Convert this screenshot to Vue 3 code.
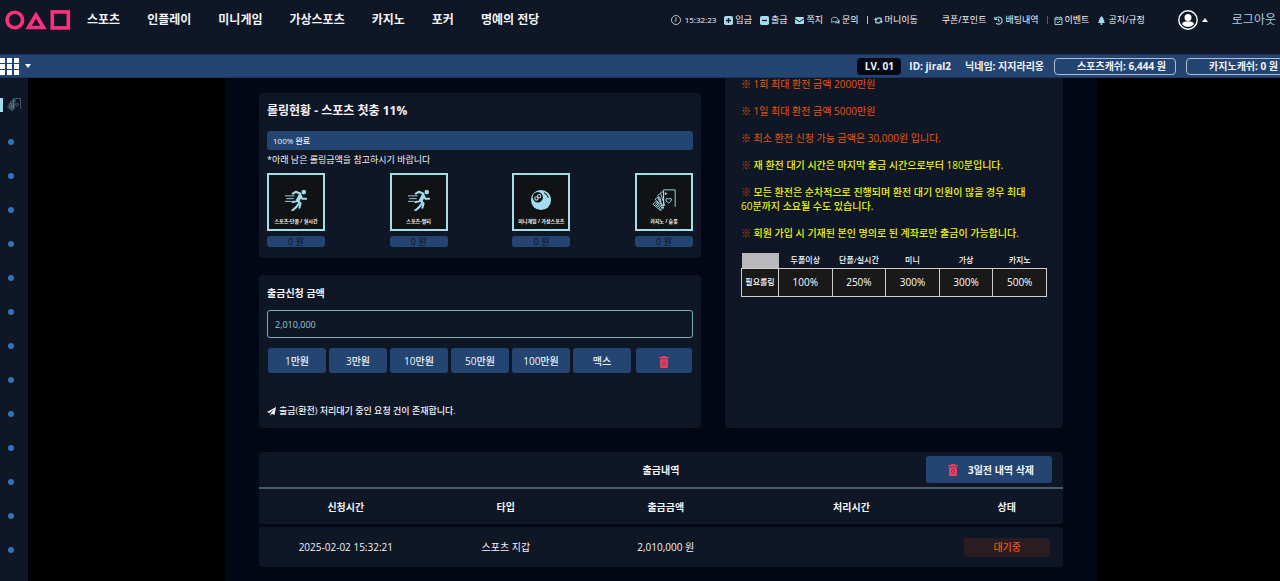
<script setup>
import { ref } from 'vue'

const nav = ['스포츠', '인플레이', '미니게임', '가상스포츠', '카지노', '포커', '명예의 전당']
const toolsLeft = [
  { icon: 'plus', label: '입금' },
  { icon: 'minus', label: '출금' },
  { icon: 'mail', label: '쪽지' },
  { icon: 'chat', label: '문의' },
]
const wallets = [
  { icon: 'run', label: '스포츠-단폴 / 실시간' },
  { icon: 'run', label: '스포츠-멀티' },
  { icon: 'ball', label: '미니게임 / 가상스포츠' },
  { icon: 'cards', label: '카지노 / 슬롯' },
]
const amounts = ['1만원', '3만원', '10만원', '50만원', '100만원', '맥스']
const limits = ['1회 최대 환전 금액 2000만원', '1일 최대 환전 금액 5000만원', '최소 환전 신청 가능 금액은 30,000원 입니다.']
const notes = [
  '재 환전 대기 시간은 마지막 출금 시간으로부터 180분입니다.',
  '모든 환전은 순차적으로 진행되며 환전 대기 인원이 많을 경우 최대 60분까지 소요될 수도 있습니다.',
  '회원 가입 시 기재된 본인 명의로 된 계좌로만 출금이 가능합니다.',
]
const ruleHeads = ['두폴이상', '단폴/실시간', '미니', '가상', '카지노']
const ruleValues = ['100%', '250%', '300%', '300%', '500%']
const historyHeads = ['신청시간', '타입', '출금금액', '처리시간', '상태']
const amount = ref('2,010,000')
</script>

<template>
  <div class="page">
    <svg class="sprite" aria-hidden="true">
      <symbol id="i-clock" viewBox="0 0 20 20"><circle cx="10" cy="10" r="9" fill="none" stroke="currentColor" stroke-width="1.6" /><path d="M10 4.500v6M10 10.500L7.500 14" fill="none" stroke="currentColor" stroke-width="1.600" /></symbol>
      <symbol id="i-plus" viewBox="0 0 16 16"><rect width="16" height="16" rx="3" fill="currentColor" /><path d="M8 3.500v9M3.500 8h9" stroke="#0f1626" stroke-width="2.400" /></symbol>
      <symbol id="i-minus" viewBox="0 0 16 16"><rect width="16" height="16" rx="3" fill="currentColor" /><path d="M3.500 8h9" stroke="#0f1626" stroke-width="2.400" /></symbol>
      <symbol id="i-mail" viewBox="0 0 18 16"><path d="M2 1h14a2 2 0 0 1 2 2v.6L9 9.400 0 3.600V3a2 2 0 0 1 2-2zM0 5.600l9 5.800 9-5.800V13a2 2 0 0 1-2 2H2a2 2 0 0 1-2-2z" fill="currentColor" /></symbol>
      <symbol id="i-chat" viewBox="0 0 20 16"><path d="M8 1c4.400 0 7.500 2.200 7.500 5s-3.100 5-7.500 5c-1.200 0-2.400-.2-3.400-.5C3.500 11.300 2 12 .4 12c.9-.9 1.400-2 1.500-3C.9 8.200.5 7.200.5 6c0-2.800 3.100-5 7.500-5z" fill="none" stroke="currentColor" stroke-width="1.800" /><path d="M17 5.500c1.600.9 2.600 2.200 2.600 3.800 0 1.200-.5 2.200-1.400 3 .1 1 .7 2 1.500 2.900-1.700 0-3.100-.7-4.200-1.500-1 .3-2 .5-3.200.5-2 0-3.800-.5-5.200-1.400C12.500 13 17.500 10.500 17 5.500z" fill="currentColor" /></symbol>
      <symbol id="i-swap" viewBox="0 0 20 16"><path d="M5 13.500h8.500M15 2.500H6.500M4.200 6v6.500q0 1 1 1M15.800 10V3.500q0-1-1-1" fill="none" stroke="currentColor" stroke-width="2.800" /><path d="M4.200 1.500L8.300 7H0zM15.800 14.500L20 9h-8.300z" fill="currentColor" /></symbol>
      <symbol id="i-history" viewBox="0 0 18 18"><path d="M3.500 4.500A7.200 7.200 0 1 1 4 14.300M9 5v4.500l3 1.800" fill="none" stroke="currentColor" stroke-width="2.200" /><path d="M.8 1v7h7z" fill="currentColor" /></symbol>
      <symbol id="i-calendar" viewBox="0 0 16 18"><path d="M1 3.500h14V17H1zM1 6.500h14M4.500 1v3M11.500 1v3M4.800 11.500l2.300 2.300 4.200-4.200" fill="none" stroke="currentColor" stroke-width="1.800" /></symbol>
      <symbol id="i-tree" viewBox="0 0 14 18"><path d="M7 0l4.500 5.500H10l3 4h-1.500L14 14H8.500v4h-3v-4H0l2.500-4.500H1l3-4H2.500z" fill="currentColor" /></symbol>
      <symbol id="i-user" viewBox="0 0 20 20"><circle cx="10" cy="10" r="9.200" fill="none" stroke="currentColor" stroke-width="1.400" /><circle cx="10" cy="7.500" r="3.500" fill="currentColor" /><path d="M4 14.200c0-2 2.300-2.900 6-2.900s6 .9 6 2.900c-1.400 1.700-3.600 2.600-6 2.600s-4.600-.9-6-2.600z" fill="currentColor" /></symbol>
      <symbol id="i-run" viewBox="0 0 24 24"><circle cx="20.500" cy="3.400" r="2.500" fill="currentColor" /><path d="M8.500 5l3.500-2 4.800 2.200-3.800 7 4 3.300-1.200 5M16.800 6.500l2 4 4.200.2M12.200 13.500l-4 .8M14.500 16.500l-2 3-4.500 4" fill="none" stroke="currentColor" stroke-width="2.200" stroke-linejoin="round" stroke-linecap="round" /><path d="M16 5l-4 8 3 2.500 3.500-7.500z" fill="currentColor" /><path d="M0 7.500h10.500M1.500 10.500h8M0 13.500h7" stroke="currentColor" stroke-width="1" /></symbol>
      <symbol id="i-ball" viewBox="0 0 24 24"><circle cx="12" cy="12" r="11" fill="currentColor" /><circle cx="8.500" cy="9" r="5.600" fill="#111214" /><g fill="none" stroke="#a5dcec" stroke-width="1.200"><circle cx="7" cy="10.300" r="1.800" /><circle cx="10" cy="7.800" r="1.800" /></g><path d="M15.500 4c2.200 1 3.800 3 4.500 5.500" stroke="#111214" stroke-width="1.100" fill="none" /></symbol>
      <symbol id="i-cards" viewBox="0 0 28 26"><g fill="none" stroke="currentColor" stroke-width="1.100"><path d="M13.500 6V1h13.700v20M13.500 20V6M16 4v3M14.800 5.500h3" /><path d="M10 4l3.500-.8v16.500M6.500 7.500L10 5l5 15M6.500 7.500l7.200 15M3.500 12l3-2 6.500 13.500M3.500 12l9 12M1 18l3-3 7 10.500M1 18l9 7.500M8.500 9l2 5M5.800 14l3 4M3.500 18l3 3" /><path d="M16.500 11.500q1.500-1 3 .5 1.500-1.500 3-.5c1 2-1 4-3 5-2-1-4-3-3-5z" /></g></symbol>
      <symbol id="i-trash" viewBox="0 0 16 20"><path d="M5 0h6l1 1.500h4V4H0V1.500h4z" fill="currentColor" /><path fill-rule="evenodd" d="M1.500 5.500h13V18a2 2 0 0 1-2 2h-9a2 2 0 0 1-2-2zM5 9v7h6V9z" fill="currentColor" /><path d="M5 9.500l6 6M11 9.500l-6 6" stroke="currentColor" stroke-width="2" /></symbol>
      <symbol id="i-plane" viewBox="0 0 18 18"><path d="M18 0l-3 16-5.500-2.300L7 18v-5L14.500 4 5 12 0 9.800z" fill="currentColor" /></symbol>
    </svg>

    <header class="top">
      <div class="topline">
        <a href="#" class="logo" aria-label="홈">
          <svg viewBox="0 0 66 20" fill="none" stroke="#ff2f7e" stroke-width="3.600"><circle cx="9.800" cy="10" r="7.800" /><path d="M31 5L23.500 17.500h15z" /><rect x="47.300" y="1.900" width="16" height="16" /></svg>
        </a>
        <nav class="nav"><a v-for="n in nav" :key="n" href="#">{{ n }}</a></nav>
        <div class="tools">
          <span class="tool time"><svg><use href="#i-clock" /></svg>15:32:23</span>
          <a v-for="t in toolsLeft" :key="t.label" href="#" class="tool"><svg><use :href="'#i-' + t.icon" /></svg>{{ t.label }}</a>
          <i class="sep"></i>
          <a href="#" class="tool"><svg><use href="#i-swap" /></svg>머니이동</a>
          <a href="#" class="tool coupon">쿠폰/포인트</a>
          <a href="#" class="tool"><svg><use href="#i-history" /></svg>배팅내역</a>
          <i class="sep blue"></i>
          <a href="#" class="tool"><svg><use href="#i-calendar" /></svg>이벤트</a>
          <a href="#" class="tool"><svg><use href="#i-tree" /></svg>공지/규정</a>
        </div>
        <button class="user" aria-label="내 계정"><svg><use href="#i-user" /></svg><i class="caret up"></i></button>
        <a href="#" class="logout">로그아웃</a>
      </div>
      <div class="bar">
        <button class="apps" aria-label="전체 메뉴"><span class="grid9"><i v-for="i in 9" :key="i"></i></span><i class="caret"></i></button>
        <div class="account">
          <span class="level">LV. 01</span>
          <span class="uid">ID: jiral2</span>
          <span class="nick">닉네임: 지지라리옹</span>
          <button class="cash">스포츠캐쉬: 6,444 원</button>
          <button class="cash">카지노캐쉬: 0 원</button>
        </div>
      </div>
    </header>

    <div class="body">
      <aside class="side">
        <a href="#" class="current" aria-label="카지노"><svg><use href="#i-cards" /></svg></a>
        <a v-for="i in 13" :key="i" href="#" class="dot" :aria-label="'메뉴 ' + i"></a>
      </aside>
      <div class="stage">
        <main class="main">
          <div class="columns">
            <div class="left">
              <section class="card rolling">
                <h2>롤링현황 - 스포츠 첫충 11%</h2>
                <div class="progress">100% 완료</div>
                <p class="hint">*아래 남은 롤링금액을 참고하시기 바랍니다</p>
                <div class="wallets">
                  <div v-for="w in wallets" :key="w.label" class="wallet">
                    <div class="tile"><svg><use :href="'#i-' + w.icon" /></svg><span>{{ w.label }}</span></div>
                    <div class="pill">0 원</div>
                  </div>
                </div>
              </section>
              <section class="card request">
                <label for="amount">출금신청 금액</label>
                <input id="amount" v-model="amount" type="text" />
                <div class="amounts">
                  <button v-for="a in amounts" :key="a">{{ a }}</button>
                  <button class="clear" aria-label="지우기"><svg><use href="#i-trash" /></svg></button>
                </div>
                <p class="pending"><svg><use href="#i-plane" /></svg>출금(환전) 처리대기 중인 요청 건이 존재합니다.</p>
              </section>
            </div>
            <section class="notice">
              <p v-for="l in limits" :key="l">※ {{ l }}</p>
              <p v-for="n in notes" :key="n" class="strong"><b>※</b> {{ n }}</p>
              <table class="rules">
                <thead><tr><td class="blank"></td><th v-for="h in ruleHeads" :key="h" scope="col">{{ h }}</th></tr></thead>
                <tbody><tr><th scope="row">필요롤링</th><td v-for="(v, i) in ruleValues" :key="i">{{ v }}</td></tr></tbody>
              </table>
            </section>
          </div>

          <section class="history">
            <div class="history-head">
              <h3>출금내역</h3>
              <button class="delete"><svg><use href="#i-trash" /></svg>3일전 내역 삭제</button>
            </div>
            <table>
              <colgroup><col class="c1" /><col class="c2" /><col class="c1" /><col class="c4" /><col class="c5" /></colgroup>
              <thead><tr><th v-for="h in historyHeads" :key="h" scope="col">{{ h }}</th></tr></thead>
              <tbody>
                <tr><td>2025-02-02 15:32:21</td><td>스포츠 지갑</td><td>2,010,000 원</td><td></td><td><span class="status">대기중</span></td></tr>
              </tbody>
            </table>
          </section>
        </main>
      </div>
    </div>
  </div>
</template>

<style>
body { background: #000; }
</style>

<style scoped>
.page { height: 100vh; overflow: hidden; display: flex; flex-direction: column; background: #000; color: #f2f4f8; font-family: "Open Sans", "Noto Sans CJK KR", sans-serif; font-size: 10px; line-height: 14px; }
.page * { box-sizing: border-box; }
.sprite { position: absolute; width: 0; height: 0; }
a { color: inherit; text-decoration: none; }
button { font: inherit; color: inherit; border: 0; padding: 0; background: none; white-space: nowrap; cursor: pointer; }
h2, h3, p { margin: 0; }

.top { position: relative; z-index: 2; flex: none; overflow: hidden; }
.topline { height: 54px; padding: 0 4px 14px 5px; display: flex; align-items: center; background: #0f1626; white-space: nowrap; }
.logo svg { display: block; width: 66px; height: 20px; }
.nav { display: flex; gap: 27px; margin-left: 16px; font-size: 12px; font-weight: 700; line-height: 16px; }
.tools { display: flex; align-items: center; gap: 8px; margin-left: auto; font-size: 9px; line-height: 12px; }
.tool { display: flex; align-items: center; gap: 2px; }
.tool svg { width: 9px; height: 9px; color: #a5dcec; }
.time { gap: 4px; font-size: 8px; }
.time svg { width: 10px; height: 10px; color: #e4e6ea; }
.sep { width: 1px; height: 8px; margin-right: -2px; background: #b9c0ca; }
.sep.blue { background: #3e6580; }
.coupon { margin-left: 16px; }
.user { display: flex; align-items: center; gap: 4px; margin-left: 33px; color: #fff; }
.user svg { width: 20px; height: 20px; }
.caret { border: 3px solid transparent; border-top: 4px solid #fff; border-bottom: 0; }
.caret.up { border-top: 0; border-bottom: 4px solid #fff; }
.logout { margin-left: 24px; font-size: 12px; line-height: 16px; color: #a8cfe0; }
.bar { height: 24px; display: flex; align-items: center; justify-content: space-between; background: #244472; border-top: 1px solid #1b355b; border-bottom: 1px solid #1b355b; }
.apps { display: flex; align-items: center; gap: 6px; }
.grid9 { display: grid; grid-template-columns: repeat(3, 5px); gap: 1px 2px; }
.grid9 i { height: 5px; background: #fff; }
.account { display: flex; align-items: center; flex: none; margin-right: -8px; font-weight: 700; white-space: nowrap; }
.level { width: 44px; line-height: 17px; text-align: center; background: #020815; border-radius: 4px; }
.uid { margin-left: 8px; }
.nick { margin-left: 14px; }
.cash { height: 17px; margin-left: 10px; padding: 0 9px 0 22px; border: 1px solid #aebfd6; border-radius: 4px; line-height: 14px; }

.body { flex: 1; min-height: 0; display: flex; }
.side { width: 28px; flex: none; padding-top: 20px; background: #0f1626; }
.current { display: block; height: 14px; margin-bottom: 27px; padding-left: 4px; border-left: 3px solid #a5dcec; }
.current svg { display: block; width: 14px; height: 13px; color: #7593a3; }
.dot { display: block; width: 6px; height: 6px; margin: 0 0 28px 8px; border-radius: 50%; background: #3373b5; }
.stage { flex: 1; display: grid; grid-template-columns: 197fr 872fr 183fr; }
.main { grid-column: 2; padding: 0 34px; background: #020815; }
.columns { display: grid; grid-template-columns: 442fr 338fr; gap: 24px; }
.left { padding-top: 15px; display: flex; flex-direction: column; gap: 17px; }
.card { padding: 0 8px; background: #0f1626; border-radius: 4px; }

.rolling { padding-top: 10px; padding-bottom: 11px; }
.rolling h2 { font-size: 12px; line-height: 16px; }
.progress { margin-top: 12px; padding-left: 6px; border-radius: 3px; background: #244472; font-size: 8px; font-weight: 500; line-height: 19px; }
.hint { margin: 4px 0 7px; font-size: 9px; line-height: 12px; }
.wallets { display: flex; justify-content: space-between; }
.wallet { width: 58px; }
.tile { height: 58px; border: 2px solid #a5dcec; background: #111214; display: flex; flex-direction: column; align-items: center; }
.tile svg { width: 26px; height: 22px; margin-top: 14px; color: #a5dcec; }
.tile span { margin-top: 7px; font-size: 5px; line-height: 7px; font-weight: 700; white-space: nowrap; }
.pill { margin-top: 5px; border-radius: 3px; background: #244472; color: #0b1220; text-align: center; font-size: 9px; line-height: 11px; }

.request { padding-top: 10px; padding-bottom: 10px; }
.request label { display: block; font-weight: 700; line-height: 16px; }
.request input { display: block; width: 100%; height: 28px; margin-top: 9px; padding: 0 7px; border: 1px solid #7fa9b8; border-radius: 3px; background: transparent; color: #9bcbd8; font: inherit; font-size: 9px; outline: 0; }
.amounts { display: grid; grid-template-columns: repeat(7, 1fr); gap: 3px; margin-top: 10px; padding: 0 1px; }
.amounts button { height: 25px; border-radius: 3px; background: #244472; font-weight: 500; }
.amounts .clear { margin-left: 2px; }
.clear svg { width: 10px; height: 12px; color: #f0405f; vertical-align: middle; }
.pending { display: flex; align-items: center; gap: 3px; margin-top: 31px; font-size: 9px; line-height: 14px; font-weight: 500; }
.pending svg { width: 9px; height: 9px; }

.notice { margin-top: -8px; padding: 7px 16px 16px; background: #0f1626; border-radius: 4px; color: #e8580c; word-break: keep-all; }
.notice p { margin-bottom: 13px; }
.notice .strong { color: #eef507; font-weight: 500; }
.strong b { color: #c44a12; font-weight: 500; }
.rules { width: 100%; table-layout: fixed; border-collapse: collapse; color: #fff; text-align: center; }
.rules th, .rules td { padding: 0; white-space: nowrap; }
.rules thead th { font-size: 8px; line-height: 14px; font-weight: 500; }
.rules .blank { width: 37px; height: 15px; background: #b9b9bb; }
.rules tbody th, .rules tbody td { height: 28px; border: 1px solid #cfcfcf; background: #191919; font-weight: 500; }
.rules tbody th { font-size: 8px; }

.history { margin-top: 24px; }
.history-head { position: relative; height: 37px; display: flex; align-items: center; justify-content: center; background: #0f1626; border-bottom: 2px solid #465c70; border-radius: 4px 4px 0 0; }
.history h3 { font-size: 10px; line-height: 14px; }
.delete { position: absolute; right: 11px; top: 4px; width: 126px; height: 27px; padding-left: 4px; display: flex; align-items: center; justify-content: center; gap: 10px; border-radius: 3px; background: #244472; font-weight: 700; }
.delete svg { width: 10px; height: 12px; color: #f0405f; }
.history table { width: 100%; table-layout: fixed; border-spacing: 0; text-align: center; }
.c1 { width: 21.6%; }
.c2 { width: 18.2%; }
.c4 { width: 24.6%; }
.c5 { width: 14%; }
.history th, .history td { padding: 0; background: #0f1626; background-clip: padding-box; }
.history th { height: 38px; border-bottom: 3px solid transparent; }
.history th:first-child { border-bottom-left-radius: 4px; }
.history th:last-child { border-bottom-right-radius: 4px; }
.history td { height: 40px; }
.history td:first-child { border-radius: 4px 0 0 4px; }
.history td:last-child { border-radius: 0 4px 4px 0; }
.status { display: block; margin: 0 13px 0 14px; line-height: 19px; border-radius: 3px; background: #2a1d22; color: #ee5410; font-weight: 500; }
</style>
